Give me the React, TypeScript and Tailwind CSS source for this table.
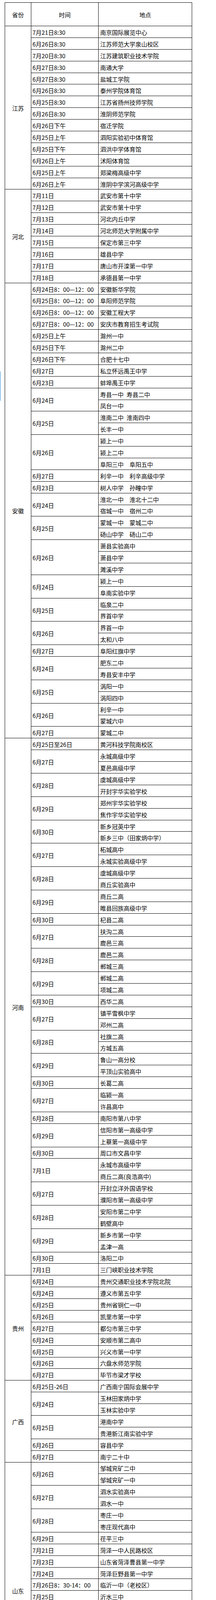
type Group = { date: string; venues: string[] }
type Section = { province: string; groups: Group[] }

const g = (date: string, ...venues: string[]): Group => ({ date, venues })

const SECTIONS: Section[] = [
  {
    province: '江苏',
    groups: [
      g('7月21日8:30', '南京国际展览中心'),
      g('6月26日8:30', '江苏师范大学泉山校区'),
      g('7月20日8:30', '江苏建筑职业技术学院'),
      g('6月27日8:30', '南通大学'),
      g('6月27日8:30', '盐城工学院'),
      g('6月26日8:30', '泰州学院体育馆'),
      g('6月25日8:30', '江苏省扬州技师学院'),
      g('6月26日8:30', '淮阴师范学院'),
      g('6月26日下午', '宿迁学院'),
      g('6月25日上午', '泗阳实验初中体育馆'),
      g('6月25日下午', '泗洪中学体育馆'),
      g('6月26日上午', '沭阳体育馆'),
      g('6月25日上午', '郑梁梅高级中学'),
      g('6月26日上午', '淮阴中学滨河高级中学'),
    ],
  },
  {
    province: '河北',
    groups: [
      g('7月11日', '武安市第十中学'),
      g('7月12日', '武安市第十中学'),
      g('7月13日', '河北内丘中学'),
      g('7月14日', '河北师范大学附属中学'),
      g('7月15日', '保定市第三中学'),
      g('7月16日', '雄县中学'),
      g('7月17日', '唐山市开滦第一中学'),
      g('7月18日', '承德县第一中学'),
    ],
  },
  {
    province: '安徽',
    groups: [
      g('6月24日8：00—12：00', '安徽新华学院'),
      g('6月25日8：00—12：00', '阜阳师范学院'),
      g('6月26日8：00—12：00', '安徽工程大学'),
      g('6月27日8：00—12：00', '安庆市教育招生考试院'),
      g('6月25日上午', '滁州一中'),
      g('6月25日下午', '滁州二中'),
      g('6月26日下午', '合肥十七中'),
      g('6月27日', '私立怀远禹王中学'),
      g('6月23日', '蚌埠禹王中学'),
      g('6月24日', '寿县一中\u2002寿县二中', '凤台一中'),
      g('6月25日', '淮南二中\u2002淮南四中', '长丰一中'),
      g('6月26日', '颍上一中', '颍上二中', '阜阳三中\u3000阜阳五中'),
      g('6月27日', '利辛一中\u3000利辛高级中学'),
      g('6月23日', '树人中学\u3000孙疃中学'),
      g('6月24日', '淮北一中\u3000淮北十二中', '宿城一中\u3000宿州二中'),
      g('6月25日', '蒙城一中\u3000蒙城二中', '砀山中学\u3000砀山二中'),
      g('6月26日', '萧县实验高中', '萧县中学', '濉溪中学'),
      g('6月24日', '颍上一中', '阜南实验中学'),
      g('6月25日', '临泉二中', '界首中学'),
      g('6月26日', '界首一中', '太和八中'),
      g('6月27日', '阜阳红旗中学'),
      g('6月24日', '肥东二中', '寿县安丰中学'),
      g('6月25日', '涡阳一中', '涡阳四中'),
      g('6月26日', '利辛一中', '蒙城六中'),
      g('6月27日', '蒙城二中'),
    ],
  },
  {
    province: '河南',
    groups: [
      g('6月25日至26日', '黄河科技学院南校区'),
      g('6月27日', '永城高级中学', '夏邑高级中学'),
      g('6月28日', '虞城高级中学', '开封宇华实验学校'),
      g('6月29日', '郑州宇华实验学校', '焦作宇华实验学校'),
      g('6月30日', '新乡冠英中学', '新乡三中（田家炳中学）'),
      g('6月27日', '柘城高中', '永城实验高级中学'),
      g('6月28日', '虞城高级中学', '商丘实验高中'),
      g('6月29日', '商丘二高', '睢县回族高级中学'),
      g('6月30日', '杞县二高'),
      g('6月27日', '扶沟二高', '鹿邑三高'),
      g('6月28日', '鹿邑二高', '郸城三高'),
      g('6月29日', '郸城二高', '项城二高'),
      g('6月30日', '西华二高'),
      g('6月27日', '镇平雪枫中学', '邓州二高'),
      g('6月28日', '社旗二高', '方城五高'),
      g('6月29日', '鲁山一高分校', '平顶山实验高中'),
      g('6月30日', '长葛二高'),
      g('6月27日', '临颍一高', '许昌高中'),
      g('6月28日', '南阳市第八中学'),
      g('6月29日', '信阳市第一高级中学', '上蔡第一高级中学'),
      g('6月30日', '周口市文昌中学'),
      g('7月1日', '永城市高级中学', '商丘二高(良浩高中)'),
      g('6月27日', '开封立洋外国语学校', '濮阳市第一高级中学'),
      g('6月28日', '安阳市第二中学', '鹤壁高中'),
      g('6月29日', '新乡市第一中学', '孟津一高'),
      g('6月30日', '洛阳二中'),
      g('7月1日', '三门峡职业技术学院'),
    ],
  },
  {
    province: '贵州',
    groups: [
      g('6月24日', '贵州交通职业技术学院北院'),
      g('6月24日', '遵义市第五中学'),
      g('6月25日', '贵州省铜仁一中'),
      g('6月26日', '凯里市第一中学'),
      g('6月27日', '都匀市第三中学'),
      g('6月24日', '安顺市第二高中'),
      g('6月25日', '兴义市第一中学'),
      g('6月26日', '六盘水师范学院'),
      g('6月27日', '毕节市梁才学校'),
    ],
  },
  {
    province: '广西',
    groups: [
      g('6月25日-26日', '广西南宁国际会展中学'),
      g('6月24日', '玉林田家炳中学', '玉林实验中学'),
      g('6月25日', '港南中学', '贵港新江南实验中学'),
      g('6月26日', '容县中学'),
      g('6月27日', '南宁二十中'),
    ],
  },
  {
    province: '山东',
    groups: [
      g('6月26日', '邹城兖矿二中', '邹城兖矿一中'),
      g('6月27日', '泗水实验高中', '泗水一中'),
      g('6月28日', '枣庄一中', '枣庄现代高中'),
      g('6月29日', '茌平三中'),
      g('7月21日', '菏泽一中人民路校区'),
      g('7月23日', '山东省菏泽曹县第一中学'),
      g('7月24日', '菏泽巨野县第一中学'),
      g('7月26日8：30-14：00', '临沂一中（老校区）'),
      g('7月25日', '沂水三中'),
      g('7月13日', '华侨中学'),
      g('7月14日', '即墨市北中学'),
      g('7月15日', '枣庄二中'),
      g('7月16日', '曲阜一中'),
      g('7月18日', '明湖中学'),
      g('7月19日', '肥城三中'),
      g('7月20日', '泰山职业技术学院'),
      g('7月21日', '新汶中学'),
      g('7月20日', '日照一中（老校）体育馆'),
      g('7月21日', '莒县一中'),
    ],
  },
  {
    province: '四川',
    groups: [
      g('6月23日', '旺苍中学', '苍溪中学'),
      g('6月24日', '仪陇宏德中学', '营山中学'),
      g('6月25日', '蓬安中学', '高坪中学'),
      g('6月26日', '嘉陵一中'),
      g('6月23日', '通江二中', '巴中高级中学'),
      g('6月24日', '西华师大附中', '巴州区恩阳中学'),
      g('6月25日', '开江县任市中学'),
    ],
  },
  {
    province: '云南',
    groups: [
      g('6月24日', '华宁一中', '玉溪二中'),
      g('6月25日', '玉溪实验中学', '元江民族中学'),
      g('6月26日', '石屏一中', '石屏二中'),
      g('6月24日', '陆良实验中学', '陆良一中'),
      g('6月25日', '罗平一中', '罗平二中'),
      g('6月26日', '沾益四中', '沾益育能学校'),
    ],
  },
  {
    province: '甘肃',
    groups: [
      g('7月20日', '兰州西北中学'),
      g('7月21日', '定西市福台高级中学'),
      g('7月22日', '庆阳市第七中学'),
      g('7月23日', '平凉市第二中学'),
      g('7月25日', '天水田家炳中学'),
      g('7月26日', '陇南市西和县第二中学'),
      g('7月21日', '白银实验中学'),
      g('7月22日', '武威市第十八中学'),
      g('7月23日', '金昌市实验中学'),
      g('7月25日', '张掖市实验中学'),
      g('7月26日', '酒泉实验中学'),
    ],
  },
  {
    province: '山西',
    groups: [
      g('7月17日上午', '太原市育英中学'),
      g('7月18日上午', '大同第二实验中学'),
      g('7月19日上午', '灵丘豪洋中学'),
      g('7月20日上午', '应县四中'),
      g('7月21日上午', '朔城区二中'),
      g('7月22日上午', '忻州三中'),
      g('7月22日下午', '五台中学'),
      g('7月18日上午', '凤华中学'),
      g('7月19日上午', '高平城南实验学校'),
      g('7月20日上午', '长治五中'),
      g('7月21日上午', '平遥现代工程技术学校'),
      g('7月22日上午', '平定二中'),
      g('7月22日下午', '晋华中学'),
      g('7月18日上午', '运城学院附属中学'),
      g('7月19日上午', '闻喜中学'),
      g('7月20日上午', '翼城县先成中学'),
      g('7月21日上午', '向阳高级学校'),
      g('7月22日上午', '孝义四中'),
      g('7月22日下午', '交城二中'),
    ],
  },
]

const cell = 'border border-black px-[3px] pt-[2px] pb-0 align-middle leading-none whitespace-pre'

function App() {
  return (
    <div className="relative h-[6036px] bg-white pl-[12px] pt-[6px] font-['Noto_Sans_CJK_SC',sans-serif] text-[15px] text-black">
      <div className="absolute left-0 top-[951px] h-[75px] w-[2px] bg-[#8ec3ea]" />
      <table className="w-[478px] table-fixed border-collapse">
        <colgroup>
          <col className="w-[67px]" />
          <col className="w-[172px]" />
          <col className="w-[239px]" />
        </colgroup>
        <thead>
          <tr className="h-[60px]">
            <th className={`${cell} text-center font-normal`}>省份</th>
            <th className={`${cell} text-center font-normal`}>时间</th>
            <th className={`${cell} text-center font-normal`}>地点</th>
          </tr>
        </thead>
        <tbody>
          {SECTIONS.map((section) => {
            const total = section.groups.reduce((n, grp) => n + grp.venues.length, 0)
            return section.groups.flatMap((grp, gi) =>
              grp.venues.map((venue, vi) => (
                <tr key={`${section.province}-${gi}-${vi}`} className="h-[29.9px]">
                  {gi === 0 && vi === 0 && (
                    <td rowSpan={total} className={`${cell} text-center`}>
                      {section.province}
                    </td>
                  )}
                  {vi === 0 && (
                    <td rowSpan={grp.venues.length} className={cell}>
                      {grp.date}
                    </td>
                  )}
                  <td className={`${cell} pl-[4px]`}>{venue}</td>
                </tr>
              )),
            )
          })}
        </tbody>
      </table>
    </div>
  )
}

export default App
